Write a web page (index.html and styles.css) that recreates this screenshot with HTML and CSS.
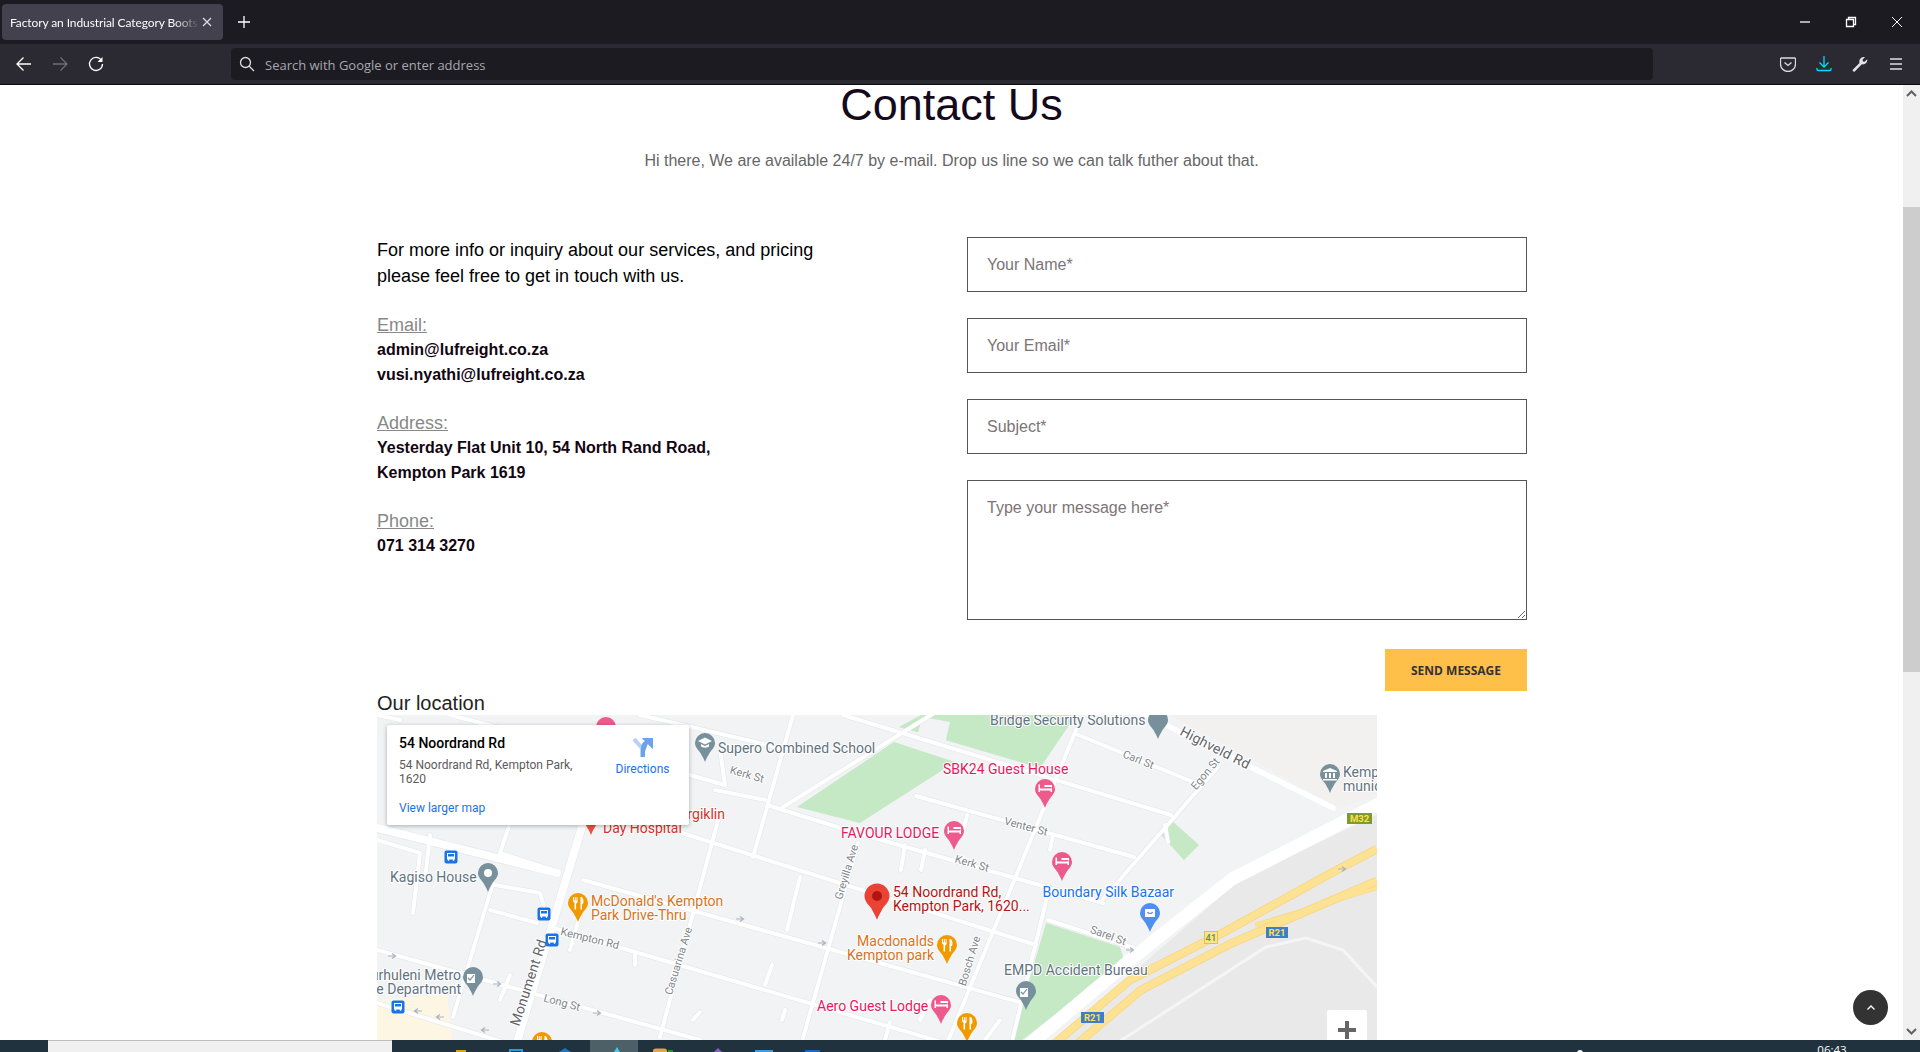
FILE: index.html
```html
<!DOCTYPE html>
<html lang="en">
<head>
<meta charset="utf-8">
<title>Contact Us</title>
<link rel="stylesheet" href="styles.css">
</head>
<body>
<header class="tabbar">
  <div class="tab"><span class="tab-title">Factory an Industrial Category Boots</span>
    <svg class="ic12" viewBox="0 0 12 12"><path d="M2 2l8 8M10 2l-8 8" class="line light"/></svg>
  </div>
  <div class="tb-btn"><svg class="ic16" viewBox="0 0 16 16"><path d="M8 2v12M2 8h12" class="line white"/></svg></div>
  <div class="win-ctrls">
    <div class="win-btn"><svg class="ic12" viewBox="0 0 12 12"><path d="M1 6h10" class="line white"/></svg></div>
    <div class="win-btn"><svg class="ic12" viewBox="0 0 12 12"><path d="M1.5 3.5h7v7h-7zM3.5 3.5v-2h7v7h-2" class="line white"/></svg></div>
    <div class="win-btn"><svg class="ic12" viewBox="0 0 12 12"><path d="M1 1l10 10M11 1L1 11" class="line white thin-line"/></svg></div>
  </div>
</header>
<nav class="toolbar">
  <div class="tb-btn"><svg class="ic16" viewBox="0 0 16 16"><path d="M15 8H1M7.5 1.5L1 8l6.5 6.5" class="line white"/></svg></div>
  <div class="tb-btn"><svg class="ic16" viewBox="0 0 16 16"><path d="M1 8h14M8.500 1.500L15 8l-6.500 6.500" class="line dim"/></svg></div>
  <div class="tb-btn"><svg class="ic16" viewBox="0 0 16 16"><path d="M13.500 4.500A6.500 6.500 0 1 0 14.500 8" class="line white"/><path d="M14.500 1v5h-5z" class="fill-white"/></svg></div>
  <div class="urlbar">
    <svg class="ic16" viewBox="0 0 16 16"><circle cx="6.500" cy="6.500" r="5" class="line light"/><path d="M10 10l5 5" class="line light"/></svg>
    <span class="url-text">Search with Google or enter address</span>
  </div>
  <div class="tb-right">
    <div class="tb-btn"><svg class="ic16" viewBox="0 0 16 16"><path d="M1.500 2h13a1 1 0 0 1 1 1v5a7 7 0 0 1-15 0V3a1 1 0 0 1 1-1z" class="line light"/><path d="M4.500 6.500L8 9.500l3.500-3" class="line light"/></svg></div>
    <div class="tb-btn"><svg class="ic16" viewBox="0 0 16 16"><path d="M8 0v10.500M3.500 6.500L8 11l4.500-4.500M1 12v1.500a1 1 0 0 0 1 1h12a1 1 0 0 0 1-1V12" class="line cyan"/></svg></div>
    <div class="tb-btn"><svg class="ic16" viewBox="0 0 16 16"><path d="M1 13.500L7.500 7c-.7-2.500.5-5.500 4-6 .8-.1 1.200 0 1.500.1L10.500 3.700l.4 1.700 1.700.4L15.200 3.300c.4 2.800-1.700 5.700-5.400 5L3 15.200a1.300 1.300 0 0 1-2-1.700z" class="fill-light"/></svg></div>
    <div class="tb-btn"><svg class="ic16" viewBox="0 0 16 16"><path d="M2 3h12M2 8h12M2 13h12" class="line light"/></svg></div>
  </div>
</nav>

<div class="viewport">
  <main class="page">
    <h1 class="title">Contact Us</h1>
    <p class="subtitle">Hi there, We are available 24/7 by e-mail. Drop us line so we can talk futher about that.</p>
    <div class="contact">
      <section class="info">
        <p class="lead">For more info or inquiry about our services, and pricing<br>please feel free to get in touch with us.</p>
        <div class="group"><div class="label">Email:</div><div class="value">admin@lufreight.co.za</div><div class="value">vusi.nyathi@lufreight.co.za</div></div>
        <div class="group"><div class="label">Address:</div><div class="value">Yesterday Flat Unit 10, 54 North Rand Road,</div><div class="value">Kempton Park 1619</div></div>
        <div class="group"><div class="label">Phone:</div><div class="value">071 314 3270</div></div>
      </section>
      <form class="form">
        <input class="field" type="text" placeholder="Your Name*">
        <input class="field" type="text" placeholder="Your Email*">
        <input class="field" type="text" placeholder="Subject*">
        <textarea class="field area" placeholder="Type your message here*"></textarea>
        <button class="send" type="button">SEND MESSAGE</button>
      </form>
    </div>
    <h2 class="loc">Our location</h2>
    <div class="map">
      <svg class="map-svg" width="1000" height="325" viewBox="377 715 1000 325">
        <defs>
          <path id="pin" d="M0-10a10 10 0 0 1 10 10c0 4.500-3.500 7-5.500 10C3 13 1.200 15.500 0 19c-1.200-3.500-3-6-4.500-9C-6.500 7-10 4.500-10 0A10 10 0 0 1 0-10z"/>
          <g id="bed"><path class="fill-w" d="M-6.500-4.500h1.500v4h11.500v-1.500h-7v-2h7.500v7h-1.500v-1.500h-10.500v1.500h-1.500z"/></g>
          <g id="food"><path class="fill-w" d="M-5-6h1v3.500h.8V-6h1v3.500h.8V-6h1v4.500c0 1-.7 1.700-1.500 2V6.500h-1.600V-.5c-.8-.3-1.500-1-1.500-2zM3-6c1.500 0 2.500 2 2.500 4.500 0 1.500-.5 2.500-1.500 3V6.500H2.500V-6z"/></g>
          <g id="bus"><rect class="bus-bg" x="-6.500" y="-6.500" width="13" height="13" rx="2"/><path class="fill-w" d="M-4-4h8v6.500h-.8v1.200h-1.400V2.500h-3.600v1.200h-1.400V2.500H-4zM-3-3v2.500h6V-3z"/></g>
          <path id="arr" d="M-4 0H3M0-2.500L3.500 0 0 2.500"/>
          <g id="minor">
            <path d="M843 715L1171 815"/><path d="M1076 734L1198 784"/><path d="M916 796L1134 857"/>
            <path d="M770 806L860 834L1103 903"/><path d="M1048 920L1140 950"/><path d="M682 833L1036 945"/>
            <path d="M583 880L1019 1002"/><path d="M550 927L945 1043"/><path d="M377 950L700 1040"/>
            <path d="M377 1003L503 1042"/><path d="M490 910L537 923"/>
            <path d="M793 715L753 857"/><path d="M720 813L660 1037"/><path d="M858 843L803 1038"/><path d="M800 877L787 930"/>
            <path d="M493 883L453 1017"/><path d="M510 823L500 853L553 870"/><path d="M1076 730L948 1041"/>
            <path d="M1218 767L1103 899"/><path d="M1049 889L1012 1041"/><path d="M783 807L955 700"/>
            <path d="M377 840L420 853L413 913"/><path d="M430 835L425 880"/><path d="M495 885L540 893L545 910"/>
            <path d="M720 750L725 785L690 775"/><path d="M715 790L765 800"/><path d="M640 715L790 750"/><path d="M450 715L500 728"/>
            <path d="M377 715L400 720"/><path d="M905 845L901 870"/><path d="M925 850L921 870"/><path d="M1053 835L1050 850"/><path d="M967 815L964 828"/>
            <path d="M635 955L635 965"/><path d="M772 965L765 985"/><path d="M1165 825L1168 842"/><path d="M785 1010L782 1020"/>
            <path d="M510 975L500 1000"/><path d="M930 1000L920 1020"/><path d="M700 1012L693 1020"/><path d="M890 1022L885 1040"/><path d="M580 915L570 950"/><path d="M1000 1020L985 1040"/>
          </g>
          <g id="major"><path d="M377 828L557 873"/><path d="M583 823L517 1042"/></g>
        </defs>
        <rect class="m-bg" x="377" y="715" width="1000" height="325"/>
        <path class="m-warm" d="M1170 715H1377V795L1340 808z"/>
        <path class="m-cream" d="M377 1000L447 994L452 1040H377z"/>
        <path class="m-grey" d="M1377 815L1240 880L1130 975L1055 1045H1377z"/>
        <path class="m-green" d="M899 727L921 715H1076L1040 768L945 740z"/>
        <path class="m-lot" d="M917 737L922 717L950 722L945 744z"/>
        <path class="m-green" d="M797 807L894 742L955 762L860 823z"/>
        <path class="m-green" d="M1171 820L1199 845L1184 860L1161 835z"/>
        <path class="m-green" d="M1046 923L1120 947L1124 960L1016 1045L1012 1040z"/>
        <use href="#major" class="road-case wide"/><use href="#minor" class="road-case"/>
        <use href="#major" class="road wide"/><use href="#minor" class="road"/>
        <path class="road-case" d="M1157 720L1333 808"/><path class="road hv" d="M1120 702L1333 808"/>
        <path class="road hw" d="M1377 805L1232 879L1130 960L1029 1045"/>
        <path class="light-road" d="M1120 1041L1266 947L1306 938L1343 950L1377 987"/>
        <path class="hy-case" d="M1377 849L1333 872L1228 930L1130 980L1053 1045"/><path class="hy-case" d="M1377 881L1286 920L1232 943L1141 990L1076 1045"/><path class="hy-case thin" d="M1377 888L1255 925"/>
        <path class="hy" d="M1377 849L1333 872L1228 930L1130 980L1053 1045"/><path class="hy" d="M1377 881L1286 920L1232 943L1141 990L1076 1045"/><path class="hy thin" d="M1377 888L1255 925"/>

        <g class="arrows"><use href="#arr" x="392" y="956"/><use href="#arr" x="497" y="984"/><use href="#arr" x="740" y="919"/><use href="#arr" x="822" y="943"/><use href="#arr" x="597" y="1013"/><use href="#arr" x="1342" y="869"/><use href="#arr" x="1130" y="950"/></g>
        <g class="arrows rev"><use href="#arr" x="-418" y="1011"/><use href="#arr" x="-440" y="1017"/><use href="#arr" x="-485" y="1030"/></g>

        <rect class="sh-green" x="1347" y="813" width="25" height="11"/><text class="sh-t" x="1359.500" y="822">M32</text>
        <rect class="sh-blue" x="1266" y="927" width="22" height="11"/><text class="sh-t" x="1277" y="936">R21</text>
        <rect class="sh-blue" x="1081" y="1012" width="23" height="11"/><text class="sh-t" x="1092.500" y="1021">R21</text>
        <rect class="sh-yel" x="1204.500" y="931.500" width="13" height="12"/><text class="sh-t g" x="1211" y="941">41</text>

        <g class="rl">
          <text transform="translate(746 778) rotate(16)">Kerk St</text>
          <text transform="translate(971 867) rotate(16)">Kerk St</text>
          <text transform="translate(589 942) rotate(14)">Kempton Rd</text>
          <text transform="translate(561 1006) rotate(15)">Long St</text>
          <text transform="translate(682 962) rotate(-73)">Casuarina Ave</text>
          <text transform="translate(850 873) rotate(-73)">Greyilla Ave</text>
          <text transform="translate(1137 763) rotate(22)">Carl St</text>
          <text transform="translate(1208 776) rotate(-50)">Egon St</text>
          <text transform="translate(1025 830) rotate(15)">Venter St</text>
          <text transform="translate(1107 939) rotate(20)">Sarel St</text>
          <text transform="translate(973 962) rotate(-73)">Bosch Ave</text>
          <text class="big" transform="translate(533 984) rotate(-72)">Monument Rd</text>
          <text class="big" transform="translate(1213 752) rotate(27)">Highveld Rd</text>
        </g>

        <g class="lb grey">
          <text x="718" y="753">Supero Combined School</text>
          <text x="390" y="882">Kagiso House</text>
          <text x="461" y="980" class="end">Ekurhuleni Metro</text>
          <text x="461" y="994" class="end">Police Department</text>
          <text x="990" y="725">Bridge Security Solutions</text>
          <text x="1004" y="975">EMPD Accident Bureau</text>
          <text x="1343" y="777">Kempton Park</text>
          <text x="1343" y="791">municipality</text>
        </g>
        <g class="lb orange">
          <text x="591" y="906">McDonald's Kempton</text>
          <text x="591" y="920">Park Drive-Thru</text>
          <text x="934" y="946" class="end">Macdonalds</text>
          <text x="934" y="960" class="end">Kempton park</text>
        </g>
        <g class="lb pink">
          <text x="943" y="774">SBK24 Guest House</text>
          <text x="841" y="838">FAVOUR LODGE</text>
          <text x="817" y="1011">Aero Guest Lodge</text>
        </g>
        <g class="lb red">
          <text x="725" y="819" class="end">Surgiklin</text>
          <text x="603" y="833">Day Hospital</text>
        </g>
        <g class="lb dred">
          <text x="893" y="897">54 Noordrand Rd,</text>
          <text x="893" y="911">Kempton Park, 1620...</text>
        </g>
        <g class="lb blue"><text x="1042.500" y="897">Boundary Silk Bazaar</text></g>

        <use href="#bus" x="451" y="857"/><use href="#bus" x="544" y="914"/><use href="#bus" x="552" y="940"/><use href="#bus" x="398" y="1007"/>

        <g class="p-grey">
          <use href="#pin" x="705" y="743"/><use href="#pin" x="488" y="873"/><use href="#pin" x="473" y="977"/>
          <use href="#pin" x="1158" y="720"/><use href="#pin" x="1330" y="774"/><use href="#pin" x="1026" y="991"/>
        </g>
        <circle class="fill-w" cx="488" cy="873" r="4"/>
        <path class="fill-w" d="M698 741L705 737.500L712 741L705 744.500zM701 744v2.500c2 1.500 6 1.500 8 0V744l-4 2z"/>
        <path class="fill-w" d="M1323 771l7-3 7 3v1h-14zM1325 773h2v5h-2zM1329 773h2v5h-2zM1333 773h2v5h-2zM1323 779h14v1.500h-14z"/>
        <path class="fill-w" d="M467 974h8v9h-8zM1020 988h8v9h-8z"/><path class="icon-grey" d="M468 978l2 2 4-5M1021 992l2 2 4-5"/>
        <g class="p-pink">
          <use href="#pin" x="606" y="727"/><use href="#pin" x="1045" y="789"/><use href="#pin" x="954" y="831"/><use href="#pin" x="1062" y="862"/><use href="#pin" x="941" y="1005"/>
        </g>
        <use href="#bed" x="1045" y="789"/><use href="#bed" x="954" y="831"/><use href="#bed" x="1062" y="862"/><use href="#bed" x="941" y="1005"/>
        <g class="p-orange">
          <use href="#pin" x="578" y="903"/><use href="#pin" x="947" y="945"/><use href="#pin" x="967" y="1023"/><use href="#pin" x="542" y="1042"/>
        </g>
        <use href="#food" x="578" y="903"/><use href="#food" x="947" y="945"/><use href="#food" x="967" y="1023"/><use href="#food" x="542" y="1042"/>
        <use href="#pin" class="p-red" x="591" y="816"/>
        <use href="#pin" class="p-blue" x="1150" y="913"/>
        <path class="fill-w" d="M1145 909h10v8h-10z"/><path class="icon-blue" d="M1147.500 909v-1.500a2.500 2.500 0 0 1 5 0V909M1147.500 912c.5 2 4.500 2 5 0"/>
        <g transform="translate(877 896) scale(1.250)"><use href="#pin" class="p-main"/><circle class="p-dot" r="4"/></g>
      </svg>

      <div class="popup">
        <div class="pop-main">
          <div class="pop-title">54 Noordrand Rd</div>
          <div class="pop-addr">54 Noordrand Rd, Kempton Park, 1620</div>
          <div class="pop-link">View larger map</div>
        </div>
        <div class="pop-dir">
          <svg class="dir-ic" viewBox="0 0 20 20"><path class="dir-a" d="M1 1l8 9v9"/><path class="dir-b" d="M10 19V10c0-3 3-6 6-7.500M12.500 1h6.500v6.500z"/></svg>
          <div class="pop-link">Directions</div>
        </div>
      </div>
      <div class="zoom-btn"><svg class="zoom-plus" viewBox="0 0 18 18"><path d="M7 0h4v7h7v4h-7v7H7v-7H0V7h7z"/></svg></div>
    </div>
  </main>
  <div class="scrollbar">
    <svg class="sb-arrow" viewBox="0 0 17 17"><path d="M4 11l4.500-4.500L13 11" class="sb-chev"/></svg>
    <div class="sb-gap"></div>
    <div class="sb-thumb"></div>
    <div class="sb-rest"></div>
    <svg class="sb-arrow" viewBox="0 0 17 17"><path d="M4 6l4.500 4.500L13 6" class="sb-chev"/></svg>
  </div>
  <div class="to-top"><svg class="ic12" viewBox="0 0 12 12"><path d="M2.500 7.500L6 4l3.500 3.500" class="line white"/></svg></div>
</div>

<footer class="taskbar">
  <div class="start"></div>
  <div class="search-box"></div>
  <svg class="task-icons" width="1528" height="12" viewBox="392 1040 1528 12">
    <rect class="t-active" x="590" y="1040" width="48" height="12"/>
    <rect class="t-or" x="456" y="1050" width="10" height="2"/>
    <path class="t-blue-o" d="M510 1052v-2h12v2"/>
    <path class="t-blue" d="M565 1048l-6 4h12z"/>
    <path class="t-cyan" d="M617 1047l-3 5h6z"/>
    <path class="t-or2" d="M653 1052v-2a3 3 0 0 1 3-1.500h8a3 3 0 0 1 3 1.500v2z"/><rect class="t-grn" x="668" y="1050" width="5" height="2"/>
    <path class="t-pur" d="M718 1048l-4 4h8z"/>
    <rect class="t-lblue" x="755" y="1050" width="18" height="2"/>
    <rect class="t-dblue" x="805" y="1050" width="15" height="2"/>
    <circle class="fill-w" cx="1580" cy="1053" r="3"/>
    <text class="clock" x="1832" y="1054">06:43</text>
  </svg>
</footer>
</body>
</html>
```

FILE: styles.css
```css
* { box-sizing: border-box; }
html, body { margin: 0; height: 1052px; overflow: hidden; }
body { display: flex; flex-direction: column; font-family: "Liberation Sans", Arial, sans-serif; background: #fff; }

/* browser chrome */
.tabbar { height: 44px; background: #1c1b22; display: flex; align-items: center; flex: none; padding-left: 2px; }
.tab { width: 221px; height: 36px; background: #42414d; border-radius: 4px; display: flex; align-items: center; padding: 0 10px 0 8px; gap: 1px; margin-right: 3px; }
.tab-title { flex: 1; overflow: hidden; white-space: nowrap; font: 12px Lato, "Noto Sans", sans-serif; letter-spacing: -.1px; color: #fbfbfe; -webkit-mask-image: linear-gradient(90deg, #000 86%, transparent 100%); mask-image: linear-gradient(90deg, #000 86%, transparent 100%); }
.tb-btn { width: 36px; height: 36px; display: flex; align-items: center; justify-content: center; flex: none; }
.win-ctrls { margin-left: auto; display: flex; }
.win-btn { width: 46px; height: 40px; display: flex; align-items: center; justify-content: center; }
.toolbar { height: 41px; background: #2b2a33; border-bottom: 1px solid #0c0c0d; display: flex; align-items: center; flex: none; padding: 0 6px; }
.urlbar { margin-left: 117px; width: 1422px; height: 32px; background: #1c1b22; border-radius: 4px; display: flex; align-items: center; padding-left: 8px; gap: 10px; }
.url-text { font: 13px "Open Sans", "Noto Sans", sans-serif; color: #a8a8ad; padding-top: 2px; }
.tb-right { margin-left: auto; display: flex; }
.ic12 { width: 12px; height: 12px; flex: none; }
.ic16 { width: 16px; height: 16px; flex: none; }
.line { fill: none; stroke-width: 1.3; }
.thin-line { stroke-width: 1; }
.white { stroke: #fff; }
.light { stroke: #dcdce0; }
.dim { stroke: #6f6e75; }
.cyan { stroke: #00ddff; }
.fill-white { fill: #fff; }
.fill-light { fill: #e4e4e8; }

/* page */
.viewport { height: 955px; display: flex; position: relative; flex: none; }
.page { flex: 1; overflow: hidden; padding-left: 377px; }
.title { margin: 0; width: 1149px; text-align: center; font-size: 45px; line-height: 40px; font-weight: 400; color: #150a1c; }
.subtitle { margin: 24px 0 64px; width: 1149px; text-align: center; font-size: 16px; line-height: 24px; color: #666; }
.contact { width: 1150px; display: grid; grid-template-columns: 590px 560px; }
.lead { margin: 0 0 24px; font-size: 18px; line-height: 26px; color: #000; }
.group { margin-bottom: 24px; }
.label { font-size: 18px; line-height: 24px; color: #888; text-decoration: underline; }
.value { font-size: 16px; line-height: 25px; font-weight: 700; color: #120512; }
.form { display: flex; flex-direction: column; gap: 26px; align-items: flex-end; }
.field { display: block; width: 560px; height: 55px; border: 1px solid #555; padding: 0 20px 0 19px; font: 16px "Liberation Sans", Arial, sans-serif; background: #fff; outline: 0; border-radius: 0; }
.field::placeholder { color: #7c7476; opacity: 1; }
.area { height: 140px; padding-top: 18px; padding-bottom: 13px; resize: vertical; }
.send { margin-top: 3px; width: 142px; height: 42px; border: 0; background: #ffc04a; color: #333; font: 700 12px "Open Sans", "Noto Sans", sans-serif; padding: 0; }
.loc { margin: 0; font-size: 20px; line-height: 24px; font-weight: 400; color: #222; }

/* map */
.map { position: relative; width: 1000px; height: 325px; overflow: hidden; }
.map-svg { display: block; font-family: Roboto, "Liberation Sans", sans-serif; }
.m-bg { fill: #f1f3f4; }
.m-warm { fill: #f2f1ef; }
.m-cream { fill: #fdf6e3; }
.m-grey { fill: #e9e9e9; }
.m-green { fill: #c5e8c5; }
.m-lot { fill: #f1f3f4; }
.road { fill: none; stroke: #fff; stroke-width: 4; stroke-linecap: round; stroke-linejoin: round; }
.road-case { fill: none; stroke: #e3e5e8; stroke-width: 5; stroke-linecap: round; stroke-linejoin: round; }
.road.wide { stroke-width: 8; }
.road-case.wide { stroke-width: 9; }
.road.hv { stroke-width: 5.500; }
.road.hw { stroke-width: 13; }
.light-road { fill: none; stroke: #f5f5f5; stroke-width: 3; }
.hy { fill: none; stroke: #fde293; stroke-width: 7; }
.hy-case { fill: none; stroke: #f8d57e; stroke-width: 8.500; }
.hy.thin { stroke-width: 3; }
.hy-case.thin { stroke-width: 4; }
.arrows { fill: none; stroke: #a9b4c2; stroke-width: 1.200; }
.arrows.rev { transform: scaleX(-1); }
.sh-green { fill: #7c9c2e; }
.sh-blue { fill: #3e7dc8; }
.sh-yel { fill: #fde293; stroke: #e3c146; }
.sh-t { font-size: 9.500px; font-weight: 700; fill: #fbe04d; text-anchor: middle; }
.sh-t.g { fill: #6f8f2f; font-weight: 500; }
.rl text { font-size: 11px; fill: #80868b; text-anchor: middle; paint-order: stroke; stroke: #fff; stroke-width: 2px; }
.rl text.big { font-size: 14px; fill: #5f6368; letter-spacing: .2px; }
.lb text { font-size: 14px; paint-order: stroke; stroke: #fff; stroke-width: 2px; stroke-linejoin: round; }
.lb .end { text-anchor: end; }
.grey text { fill: #5f7380; }
.orange text { fill: #d9731a; }
.pink text { fill: #e8185f; }
.red text { fill: #d93025; }
.dred text { fill: #b31412; }
.blue text { fill: #1a73e8; }
.fill-w { fill: #fff; }
.bus-bg { fill: #1a73e8; }
.p-grey { fill: #78909c; }
.p-pink { fill: #ee5a8c; }
.p-orange { fill: #f29900; }
.p-red { fill: #e8503f; }
.p-blue { fill: #4e8ff0; }
.p-main { fill: #ea4335; }
.p-dot { fill: #b31412; }
.icon-grey { fill: none; stroke: #78909c; stroke-width: 1.200; }
.icon-blue { fill: none; stroke: #4e8ff0; stroke-width: 1.200; }

.popup { position: absolute; left: 10px; top: 10px; width: 302px; height: 100px; background: #fff; border-radius: 2px; box-shadow: 0 1px 4px rgba(0,0,0,.3); display: flex; font-family: Roboto, "Liberation Sans", sans-serif; padding: 9px 0 0 12px; }
.pop-main { width: 195px; }
.pop-title { font-size: 14px; line-height: 18px; font-weight: 500; color: #000; }
.pop-addr { margin-top: 6px; font-size: 12px; line-height: 14px; color: #5b5b5b; height: 28px; }
.pop-link { font-size: 12px; line-height: 14px; color: #1a73e8; white-space: nowrap; }
.pop-main .pop-link { margin-top: 15px; }
.pop-dir { margin-left: 21.500px; display: flex; flex-direction: column; align-items: center; gap: 4px; padding-top: 4px; width: 54px; }
.dir-ic { width: 20px; height: 20px; }
.dir-a { fill: none; stroke: #b6d2f5; stroke-width: 4; }
.dir-b { fill: #6ba3ec; stroke: #6ba3ec; stroke-width: 4; stroke-linejoin: miter; }
.zoom-btn { position: absolute; left: 950px; top: 295px; width: 40px; height: 40px; background: #fff; border-radius: 2px; display: flex; align-items: center; justify-content: center; }
.zoom-plus { width: 18px; height: 18px; fill: #666; }

/* scrollbar */
.scrollbar { width: 17px; flex: none; background: #f0f0f0; display: flex; flex-direction: column; }
.sb-arrow { width: 17px; height: 17px; flex: none; }
.sb-chev { fill: none; stroke: #606060; stroke-width: 2; }
.sb-gap { height: 105px; flex: none; }
.sb-thumb { height: 465px; background: #cdcdcd; flex: none; }
.sb-rest { flex: 1; }
.to-top { position: absolute; right: 32px; bottom: 15px; width: 35px; height: 35px; border-radius: 50%; background: #333; display: flex; align-items: center; justify-content: center; }

/* taskbar */
.taskbar { height: 12px; flex: none; background: #1f323d; display: flex; overflow: hidden; }
.start { width: 48px; flex: none; }
.search-box { width: 344px; flex: none; background: #f0f0f0; border-top: 1px solid #bdbdbd; }
.task-icons { flex: none; font-family: "Open Sans", "Noto Sans", sans-serif; }
.t-active { fill: #4d5f67; }
.t-or { fill: #d9a21b; }
.t-blue-o { fill: none; stroke: #1ba1e2; stroke-width: 2; }
.t-blue { fill: #1976c9; }
.t-cyan { fill: #3ccbea; }
.t-or2 { fill: #e8a04a; }
.t-grn { fill: #2e8b3d; }
.t-pur { fill: #8a5cc7; }
.t-lblue { fill: #3f9be0; }
.t-dblue { fill: #1668c4; }
.clock { font-size: 11.500px; fill: #fff; text-anchor: middle; }
```
